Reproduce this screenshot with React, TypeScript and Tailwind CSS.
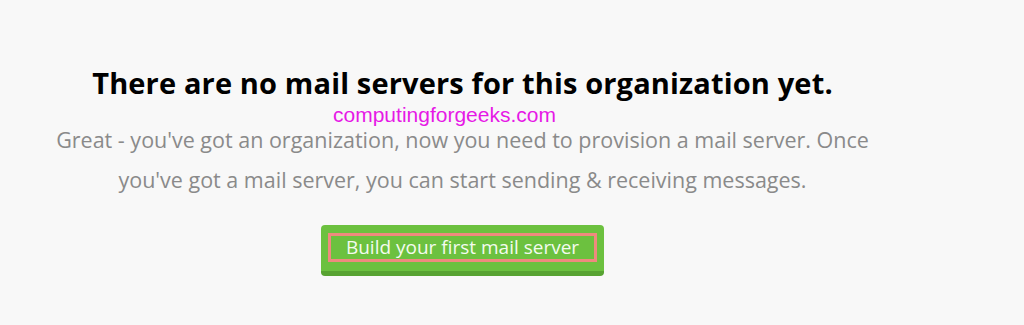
import React from "react";

export default function App() {
  return (
    <div className="w-[1024px] h-[325px] bg-[#f8f8f8] overflow-hidden" style={{ fontFamily: "'Open Sans', 'Noto Sans', sans-serif" }}>
      <div className="w-[925px] flex flex-col items-center text-center pt-[63px]">
        <h1 className="text-[29px] leading-[40px] font-bold text-black tracking-[0.15px]">
          There are no mail servers for this organization yet.
        </h1>
        <div className="h-[22px] leading-[22px] text-[21px] text-[#e619e6] -ml-[36px] mt-[1px]" style={{ fontFamily: "'Liberation Sans', Arial, sans-serif" }}>
          computingforgeeks.com
        </div>
        <p className="text-[21.5px] leading-[40px] text-[#8a8a8a] w-[840px] -mt-[6px]">
          Great - you've got an organization, now you need to provision a mail server. Once you've got a mail server, you can start sending &amp; receiving messages.
        </p>
        <button className="mt-[25px] w-[283px] h-[51px] rounded-[4px] bg-[#6cc13f] border-b-[5px] border-[#58a332] pt-[8px] px-[7px] flex flex-col items-stretch">
          <span className="h-[29px] border-[3px] border-[#ef8a7e] text-[#f4fbef] text-[19px] leading-[23px] flex items-center justify-center">
            Build your first mail server
          </span>
        </button>
      </div>
    </div>
  );
}
